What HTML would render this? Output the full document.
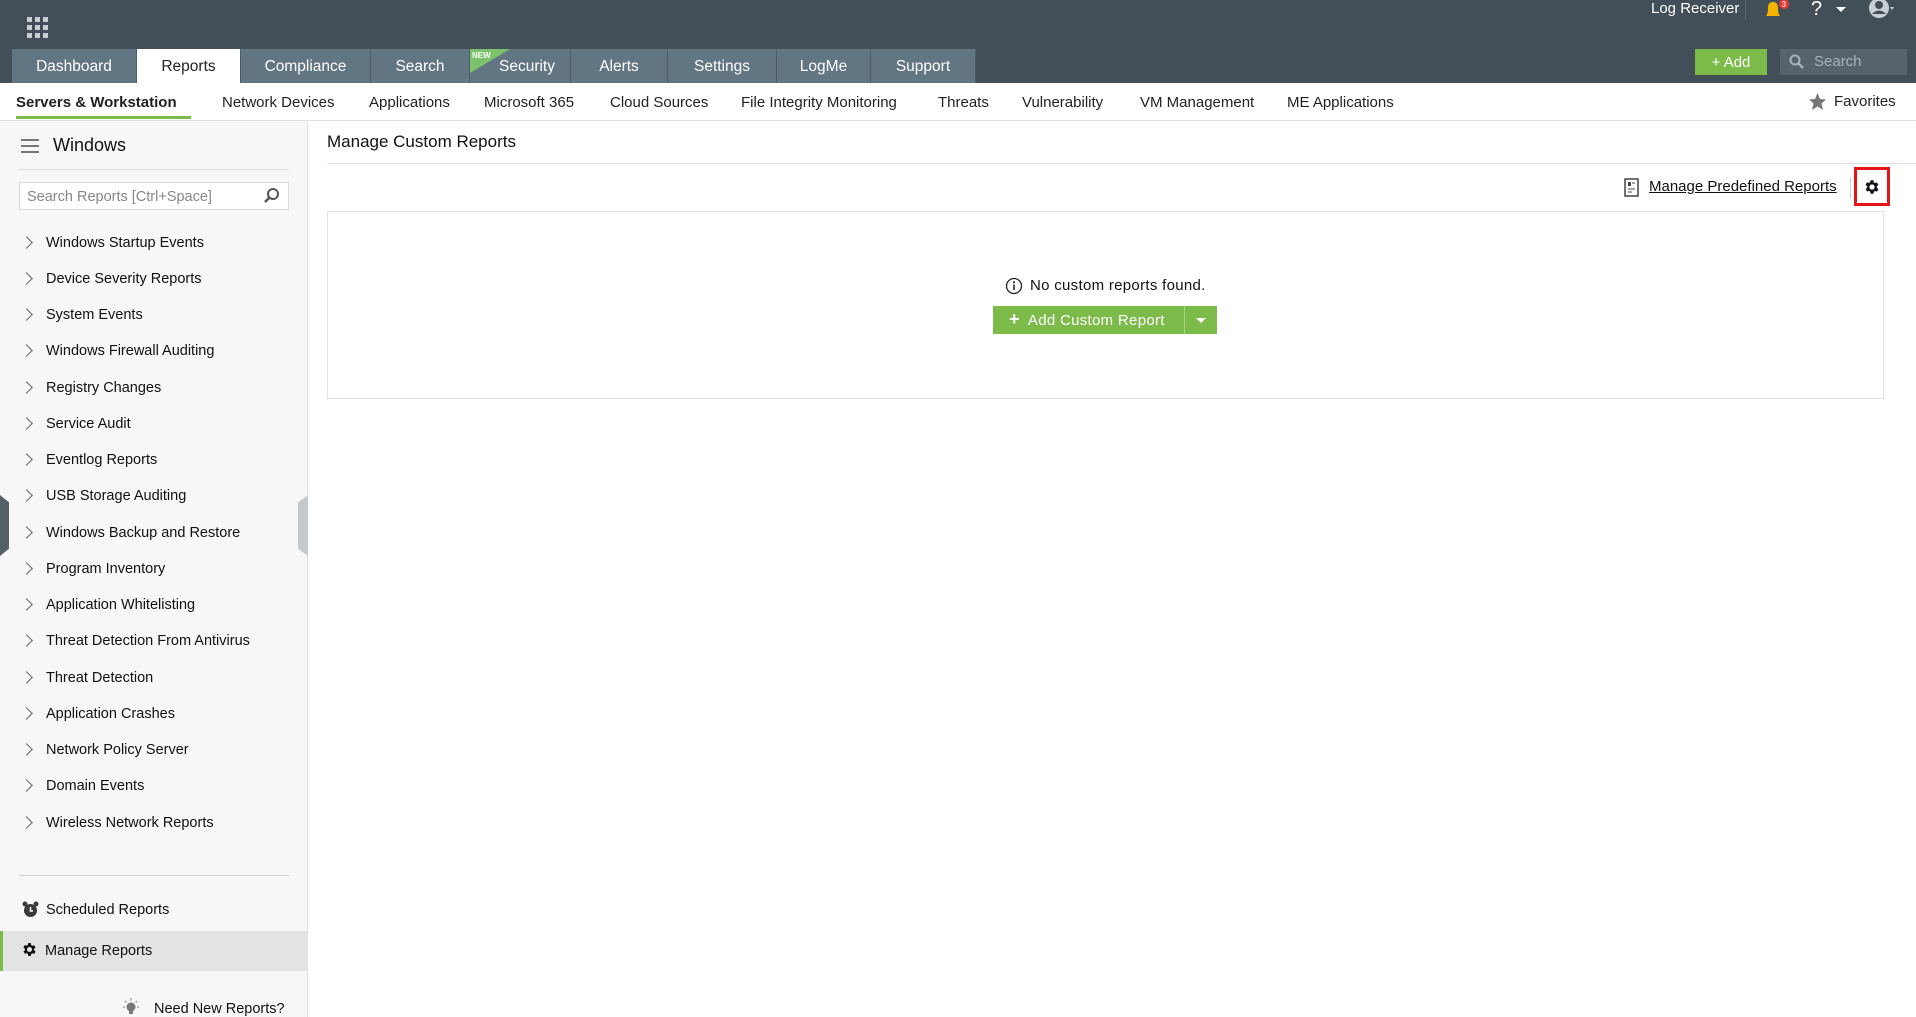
<!DOCTYPE html>
<html><head><meta charset="utf-8"><style>
*{box-sizing:border-box;margin:0;padding:0}
body{width:1916px;height:1017px;overflow:hidden;font-family:"Liberation Sans",sans-serif;background:#fff;position:relative;color:#111}
.abs{position:absolute}
#top{left:0;top:0;width:1916px;height:83px;background:#424f59}
.tab{position:absolute;top:49px;height:34px;background:#627582;color:#fff;font-size:15.5px;line-height:36px;text-align:center;border-right:1px solid #4d5d68}
.tab.on{background:#fff;color:#222}
.sub{position:absolute;top:94px;font-size:15px;color:#222}
.side{left:0;top:121px;width:308px;height:896px;background:#f7f7f7;border-right:1px solid #e2e2e2}
.it{position:absolute;left:46px;font-size:14.5px;color:#111;margin-top:2px}
.chev{position:absolute;left:22px;width:9px;height:9px;border-right:1.5px solid #666;border-top:1.5px solid #666;transform:rotate(45deg);margin-top:1px}
</style></head><body>
<div id="top" class="abs"></div>
<svg class="abs" style="left:27px;top:17px" width="22" height="22"><g fill="#c8ced2"><rect x="0" y="0" width="5" height="5"/><rect x="8" y="0" width="5" height="5"/><rect x="16" y="0" width="5" height="5"/><rect x="0" y="8" width="5" height="5"/><rect x="8" y="8" width="5" height="5"/><rect x="16" y="8" width="5" height="5"/><rect x="0" y="16" width="5" height="5"/><rect x="8" y="16" width="5" height="5"/><rect x="16" y="16" width="5" height="5"/></g></svg>
<div class="tab" style="left:12px;width:125px">Dashboard</div>
<div class="tab on" style="left:137px;width:104px">Reports</div>
<div class="tab" style="left:241px;width:130px">Compliance</div>
<div class="tab" style="left:371px;width:99px">Search</div>
<div class="tab" style="left:470px;width:101px;padding-left:14px">Security</div>
<svg class="abs" style="left:470px;top:49px" width="40" height="24"><polygon points="0,0 40,0 0,24" fill="#7cc26a"/><text x="2" y="9" font-size="8" fill="#fff" font-weight="bold" font-family="Liberation Sans">NEW</text></svg>
<div class="tab" style="left:571px;width:97px">Alerts</div>
<div class="tab" style="left:668px;width:109px">Settings</div>
<div class="tab" style="left:777px;width:94px">LogMe</div>
<div class="tab" style="left:871px;width:105px">Support</div>
<div class="abs" style="left:1651px;top:0;color:#fff;font-size:15px">Log Receiver</div>
<div class="abs" style="left:1745px;top:0;width:1px;height:20px;background:#5b6770"></div>
<svg class="abs" style="left:1762px;top:0" width="30" height="20"><path d="M4 16 Q6 14 6 8 Q6 2 11 2 Q16 2 16 8 Q16 14 18 16Z" fill="#f4b400"/><circle cx="22" cy="4" r="5" fill="#e53935"/><text x="19.5" y="7" font-size="8" fill="#fff" font-family="Liberation Sans">3</text></svg>
<div class="abs" style="left:1811px;top:-2px;color:#fff;font-size:20px">?</div>
<div class="abs" style="left:1836px;top:7px;border:5px solid transparent;border-top-color:#fff"></div>
<svg class="abs" style="left:1868px;top:0" width="30" height="20"><circle cx="11" cy="8" r="10" fill="#c8ced2"/><circle cx="11" cy="5" r="4" fill="#424f59"/><path d="M4 14 Q11 7 18 14" fill="#424f59"/><path d="M22 7 l4 0 l-2 3z" fill="#c8ced2"/></svg>
<div class="abs" style="left:1695px;top:49px;width:72px;height:26px;background:#7cba49;color:#fff;font-size:15px;line-height:28px;text-align:center">+ Add</div>
<div class="abs" style="left:1780px;top:49px;width:127px;height:26px;background:#56636c;color:#a9b2b8;font-size:15px;line-height:26px;padding-left:34px">Search</div>
<svg class="abs" style="left:1789px;top:54px" width="16" height="16"><circle cx="6" cy="6" r="4.5" stroke="#a9b2b8" stroke-width="2" fill="none"/><line x1="9.5" y1="9.5" x2="14" y2="14" stroke="#a9b2b8" stroke-width="2.5"/></svg>

<div class="sub" style="left:16px;font-weight:bold">Servers &amp; Workstation</div>
<div class="abs" style="left:16px;top:116px;width:175px;height:3px;background:#7cba49"></div>
<div class="sub" style="left:222px">Network Devices</div>
<div class="sub" style="left:369px">Applications</div>
<div class="sub" style="left:484px">Microsoft 365</div>
<div class="sub" style="left:610px">Cloud Sources</div>
<div class="sub" style="left:741px">File Integrity Monitoring</div>
<div class="sub" style="left:938px">Threats</div>
<div class="sub" style="left:1022px">Vulnerability</div>
<div class="sub" style="left:1140px">VM Management</div>
<div class="sub" style="left:1287px">ME Applications</div>
<svg class="abs" style="left:1809px;top:93px" width="17" height="17"><polygon points="8.5,0 11,6 17,6.5 12.5,10.5 14,17 8.5,13.5 3,17 4.5,10.5 0,6.5 6,6" fill="#777"/></svg>
<div class="sub" style="left:1834px;top:93px">Favorites</div>
<div class="abs" style="left:0;top:120px;width:1916px;height:1px;background:#e0e0e0"></div>

<div class="side abs"></div>
<div class="abs" style="left:21px;top:139px;width:18px;height:2px;background:#777;box-shadow:0 6px 0 #777,0 12px 0 #777"></div>
<div class="abs" style="left:53px;top:135px;font-size:18px;color:#111">Windows</div>
<div class="abs" style="left:19px;top:169px;width:270px;height:1px;background:#ddd"></div>
<div class="abs" style="left:19px;top:182px;width:270px;height:28px;background:#fff;border:1px solid #ddd;font-size:14.5px;color:#888;line-height:28px;padding-left:7px">Search Reports [Ctrl+Space]</div>
<svg class="abs" style="left:263px;top:187px" width="18" height="18"><circle cx="10" cy="7" r="5" stroke="#555" stroke-width="2" fill="none"/><line x1="6.5" y1="10.5" x2="2" y2="15" stroke="#555" stroke-width="2.5"/></svg>

<div class="chev" style="top:237px"></div><div class="it" style="top:233px">Windows Startup Events</div>
<div class="chev" style="top:273px"></div><div class="it" style="top:269px">Device Severity Reports</div>
<div class="chev" style="top:309px"></div><div class="it" style="top:305px">System Events</div>
<div class="chev" style="top:345px"></div><div class="it" style="top:341px">Windows Firewall Auditing</div>
<div class="chev" style="top:382px"></div><div class="it" style="top:378px">Registry Changes</div>
<div class="chev" style="top:418px"></div><div class="it" style="top:414px">Service Audit</div>
<div class="chev" style="top:454px"></div><div class="it" style="top:450px">Eventlog Reports</div>
<div class="chev" style="top:490px"></div><div class="it" style="top:486px">USB Storage Auditing</div>
<div class="chev" style="top:527px"></div><div class="it" style="top:523px">Windows Backup and Restore</div>
<div class="chev" style="top:563px"></div><div class="it" style="top:559px">Program Inventory</div>
<div class="chev" style="top:599px"></div><div class="it" style="top:595px">Application Whitelisting</div>
<div class="chev" style="top:635px"></div><div class="it" style="top:631px">Threat Detection From Antivirus</div>
<div class="chev" style="top:672px"></div><div class="it" style="top:668px">Threat Detection</div>
<div class="chev" style="top:708px"></div><div class="it" style="top:704px">Application Crashes</div>
<div class="chev" style="top:744px"></div><div class="it" style="top:740px">Network Policy Server</div>
<div class="chev" style="top:780px"></div><div class="it" style="top:776px">Domain Events</div>
<div class="chev" style="top:817px"></div><div class="it" style="top:813px">Wireless Network Reports</div>
<div class="abs" style="left:19px;top:875px;width:270px;height:1px;background:#ccc"></div>
<svg class="abs" style="left:22px;top:901px" width="17" height="17"><circle cx="8.5" cy="9.5" r="6.5" fill="#3a3a3a"/><circle cx="3" cy="3" r="2.5" fill="#3a3a3a"/><circle cx="14" cy="3" r="2.5" fill="#3a3a3a"/><path d="M8.5 6 V10 H11" stroke="#fff" stroke-width="1.5" fill="none"/></svg>
<div class="it" style="top:900px">Scheduled Reports</div>
<div class="abs" style="left:0;top:931px;width:307px;height:40px;background:#e2e3e5;border-left:3px solid #7cba49"></div>
<svg class="abs" style="left:21px;top:941px" width="17" height="17" viewBox="0 0 24 24"><path fill="#111" d="M19.4 13a7.5 7.5 0 000-2l2.1-1.6-2-3.5-2.5 1a7 7 0 00-1.7-1L15 3h-4l-.4 2.7a7 7 0 00-1.7 1l-2.5-1-2 3.5L6.6 11a7.5 7.5 0 000 2l-2.1 1.6 2 3.5 2.5-1a7 7 0 001.7 1L11 21h4l.4-2.7a7 7 0 001.7-1l2.5 1 2-3.5zM13 15.5a3.5 3.5 0 110-7 3.5 3.5 0 010 7z" transform="translate(-1 0)"/></svg>
<div class="it" style="top:941px;left:45px">Manage Reports</div>
<svg class="abs" style="left:122px;top:998px" width="18" height="19"><circle cx="9" cy="9" r="4.5" fill="#777"/><g stroke="#999" stroke-width="1.3"><line x1="9" y1="0" x2="9" y2="2.5"/><line x1="1" y1="9" x2="3" y2="9"/><line x1="15" y1="9" x2="17" y2="9"/><line x1="3" y1="3" x2="4.5" y2="4.5"/><line x1="15" y1="3" x2="13.5" y2="4.5"/></g><rect x="7" y="13" width="4" height="3" fill="#777"/></svg>
<div class="it" style="top:999px;left:154px">Need New Reports?</div>
<div class="abs" style="left:0;top:495px;width:9px;height:61px;background:#555f66;clip-path:polygon(0 0,100% 12%,100% 88%,0 100%)"></div>
<div class="abs" style="left:298px;top:495px;width:10px;height:61px;background:#c6c9cc;clip-path:polygon(0 12%,100% 0,100% 100%,0 88%)"></div>

<div class="abs" style="left:327px;top:132px;font-size:17px;color:#111">Manage Custom Reports</div>
<div class="abs" style="left:327px;top:163px;width:1589px;height:1px;background:#e3e3e3"></div>
<svg class="abs" style="left:1624px;top:178px" width="15" height="19"><rect x="1" y="1" width="13" height="17" fill="#fff" stroke="#444" stroke-width="1.5"/><rect x="4" y="4" width="3" height="4" fill="#444"/><line x1="8" y1="5" x2="11" y2="5" stroke="#444"/><line x1="4" y1="11" x2="11" y2="11" stroke="#444"/><line x1="4" y1="14" x2="8" y2="14" stroke="#444"/></svg>
<div class="abs" style="left:1649px;top:178px;font-size:15px;color:#111;text-decoration:underline">Manage Predefined Reports</div>
<div class="abs" style="left:1850px;top:178px;width:1px;height:20px;background:#ccc"></div>
<div class="abs" style="left:1854px;top:167px;width:36px;height:39px;border:3px solid #e4141b"></div>
<svg class="abs" style="left:1863px;top:178px" width="18" height="18" viewBox="0 0 24 24"><path fill="#111" d="M19.4 13a7.5 7.5 0 000-2l2.1-1.6-2-3.5-2.5 1a7 7 0 00-1.7-1L15 3h-4l-.4 2.7a7 7 0 00-1.7 1l-2.5-1-2 3.5L6.6 11a7.5 7.5 0 000 2l-2.1 1.6 2 3.5 2.5-1a7 7 0 001.7 1L11 21h4l.4-2.7a7 7 0 001.7-1l2.5 1 2-3.5zM13 15.5a3.5 3.5 0 110-7 3.5 3.5 0 010 7z" transform="translate(-1 0)"/></svg>
<div class="abs" style="left:327px;top:211px;width:1557px;height:188px;border:1px solid #e3e3e3"></div>
<svg class="abs" style="left:1005px;top:277px" width="18" height="18"><circle cx="9" cy="9" r="7.5" stroke="#222" stroke-width="1.3" fill="none"/><circle cx="9" cy="5.3" r="1.1" fill="#222"/><rect x="8.2" y="7.5" width="1.6" height="5.5" fill="#222"/></svg>
<div class="abs" style="left:1030px;top:277px;font-size:15px;color:#111;letter-spacing:0.3px">No custom reports found.</div>
<div class="abs" style="left:993px;top:306px;width:224px;height:28px;background:#7cba49"></div>
<div class="abs" style="left:1184px;top:306px;width:1px;height:28px;background:#a9d48a"></div>
<div class="abs" style="left:1009px;top:312px;color:#fff;font-size:15px;letter-spacing:0.3px"><b style="font-size:18px;line-height:15px">+</b>&nbsp; Add Custom Report</div>
<div class="abs" style="left:1196px;top:318px;border:5px solid transparent;border-top-color:#fff"></div>
</body></html>
